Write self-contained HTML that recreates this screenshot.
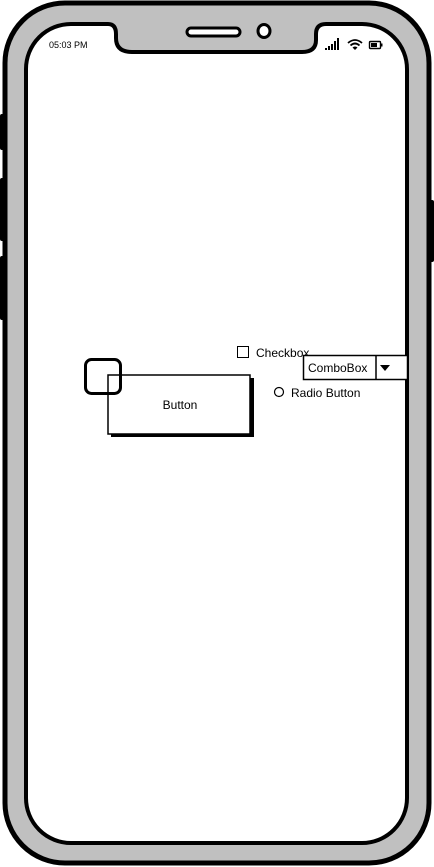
<!DOCTYPE html>
<html><head><style>
html,body{margin:0;padding:0;background:#fff;width:434px;height:867px;overflow:hidden}
svg{display:block}
text{font-family:"Liberation Sans",sans-serif;fill:#000}
</style></head><body>
<svg width="434" height="867" viewBox="0 0 434 867">
<rect x="0" y="114" width="6" height="36" rx="2" fill="#000"/>
<rect x="0" y="178" width="6" height="63" rx="2" fill="#000"/>
<rect x="0" y="256" width="6" height="64" rx="2" fill="#000"/>
<rect x="428" y="200" width="6" height="62" rx="2" fill="#000"/>
<rect x="5" y="3" width="424" height="860" rx="60" fill="#c0c0c0" stroke="#000" stroke-width="5"/>
<path d="M71 24 L108 24 Q116 24 116 34 L116 38 Q116 52 132 52 L302 52 Q316 52 316 40 L316 34 Q316 24 326 24 L362 24 A45 45 0 0 1 407 69 L407 798 A45 45 0 0 1 362 843 L71 843 A45 45 0 0 1 26 798 L26 69 A45 45 0 0 1 71 24 Z" fill="#fff" stroke="#000" stroke-width="4"/>
<rect x="187" y="28" width="53" height="8" rx="4" fill="#fff" stroke="#000" stroke-width="3"/>
<ellipse cx="264" cy="31" rx="6" ry="6.5" fill="#fff" stroke="#000" stroke-width="3"/>
<text x="49" y="48" font-size="9">05:03 PM</text>
<rect x="325" y="48" width="2" height="2" fill="#000"/>
<rect x="328" y="46" width="2" height="4" fill="#000"/>
<rect x="331" y="44" width="2" height="6" fill="#000"/>
<rect x="334" y="41" width="2" height="9" fill="#000"/>
<rect x="337" y="38" width="2" height="12" fill="#000"/>
<path d="M348 43 Q355 37 362 43 M350.5 45.5 Q355 41.5 359.5 45.5" fill="none" stroke="#000" stroke-width="1.8"/>
<path d="M352.5 47.5 L355 50 L357.5 47.5 Q355 45.5 352.5 47.5 Z" fill="#000"/>
<rect x="369.5" y="41.5" width="11" height="7" rx="1" fill="none" stroke="#000" stroke-width="1.4"/>
<rect x="371" y="43" width="6" height="4" fill="#000"/>
<rect x="381" y="43.5" width="1.5" height="3" fill="#000"/>
<rect x="237.5" y="346.5" width="11" height="11" fill="#fff" stroke="#000" stroke-width="1"/>
<text x="256" y="357" font-size="12">Checkbox</text>
<rect x="303.5" y="355.5" width="104" height="24" fill="#fff" stroke="#000" stroke-width="1.5"/>
<line x1="376" y1="355" x2="376" y2="380" stroke="#000" stroke-width="1.5"/>
<text x="308" y="372" font-size="12">ComboBox</text>
<path d="M380 365 L390 365 L385 371 Z" fill="#000"/>
<circle cx="279" cy="392" r="4.5" fill="#fff" stroke="#000" stroke-width="1.2"/>
<text x="291" y="397" font-size="12">Radio Button</text>
<rect x="111" y="378" width="143" height="59" fill="#000"/>
<rect x="108" y="375" width="142" height="59" fill="#fff" stroke="#000" stroke-width="1.5"/>
<text x="180" y="409" font-size="12" text-anchor="middle">Button</text>
<rect x="85.5" y="359.5" width="35" height="34" rx="6" fill="none" stroke="#000" stroke-width="3"/>
</svg>
</body></html>
